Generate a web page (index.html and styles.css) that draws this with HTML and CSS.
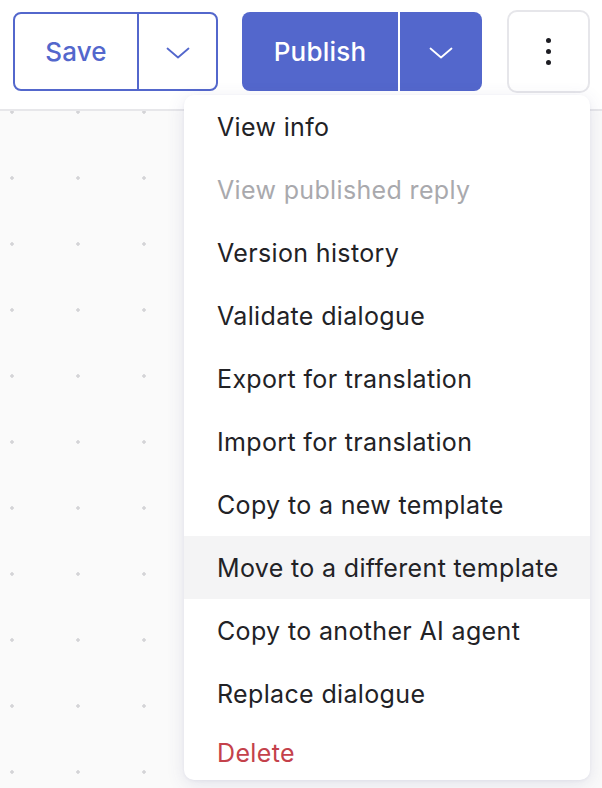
FILE: index.html
```html
<!DOCTYPE html>
<html>
<head>
<meta charset="utf-8">
<link rel="stylesheet" href="styles.css">
</head>
<body>
<div class="page">
  <header class="toolbar">
    <div class="split split-outline">
      <button class="seg seg-main">Save</button>
      <button class="seg seg-caret" aria-label="More save options">
        <svg width="24" height="12" viewBox="0 0 24 12"><path d="M1.5 1.5 L12 10.5 L22.5 1.5" fill="none" stroke="currentColor" stroke-width="1.8" stroke-linecap="round" stroke-linejoin="round"/></svg>
      </button>
    </div>
    <div class="split split-solid">
      <button class="seg seg-main">Publish</button>
      <button class="seg seg-caret" aria-label="More publish options">
        <svg width="24" height="12" viewBox="0 0 24 12"><path d="M1.5 1.5 L12 10.5 L22.5 1.5" fill="none" stroke="currentColor" stroke-width="1.8" stroke-linecap="round" stroke-linejoin="round"/></svg>
      </button>
    </div>
    <button class="kebab" aria-label="More">
      <span class="dot"></span><span class="dot"></span><span class="dot"></span>
    </button>
  </header>
  <main class="canvas"></main>
  <ul class="menu">
    <li class="item">View info</li>
    <li class="item disabled">View published reply</li>
    <li class="item">Version history</li>
    <li class="item">Validate dialogue</li>
    <li class="item">Export for translation</li>
    <li class="item">Import for translation</li>
    <li class="item">Copy to a new template</li>
    <li class="item hover">Move to a different template</li>
    <li class="item">Copy to another AI agent</li>
    <li class="item">Replace dialogue</li>
    <li class="item danger last">Delete</li>
  </ul>
</div>
</body>
</html>
```
FILE: styles.css
```css
* { box-sizing: border-box; }
html, body { margin: 0; padding: 0; }
body {
  width: 602px;
  height: 788px;
  overflow: hidden;
  font-family: Inter, "Noto Sans", "Liberation Sans", sans-serif;
  background: #fafafa;
}
.page {
  position: relative;
  width: 602px;
  height: 788px;
  display: flex;
  flex-direction: column;
}
.toolbar {
  height: 111px;
  flex: none;
  background: #ffffff;
  border-bottom: 2px solid #e7e7ea;
  display: flex;
  align-items: flex-start;
  padding: 12px 0 0 13px;
  gap: 24px;
}
.split {
  display: flex;
  height: 79px;
  border-radius: 8px;
  overflow: hidden;
}
.seg {
  border: none;
  background: transparent;
  color: inherit;
  font-family: inherit;
  font-size: 26px;
  font-weight: 500;
  letter-spacing: 0.2px;
  display: flex;
  align-items: center;
  justify-content: center;
  padding: 0;
  margin: 0;
}
.split-outline {
  border: 2px solid #5367cc;
  color: #5367cc;
  width: 205px;
}
.split-outline .seg-main { width: 124px; border-right: 2px solid #5367cc; }
.split-outline .seg-caret { flex: 1; }
.split-solid {
  background: #5367cc;
  color: #ffffff;
  width: 240px;
}
.split-solid .seg-main { width: 158px; border-right: 2px solid #ffffff; }
.split-solid .seg-caret { flex: 1; }
.seg-caret svg { display: block; margin-top: 2px; }
.kebab {
  width: 83px;
  height: 83px;
  margin-left: 1px;
  margin-top: -2px;
  border: 2px solid #e6e6ea;
  border-radius: 10px;
  background: #ffffff;
  display: flex;
  flex-direction: column;
  align-items: center;
  justify-content: center;
  gap: 5.5px;
  padding: 0;
}
.dot {
  width: 5.5px;
  height: 5.5px;
  border-radius: 50%;
  background: #1c1c22;
}
.canvas {
  flex: 1;
  background-color: #fafafa;
  background-image: radial-gradient(circle, #d4d4d7 1.5px, transparent 1.9px);
  background-size: 66px 66px;
  background-position: 45px 34px;
}
.menu {
  position: absolute;
  left: 184px;
  top: 95px;
  width: 406px;
  height: 685px;
  margin: 0;
  padding: 0;
  list-style: none;
  background: #ffffff;
  border-radius: 10px;
  box-shadow: 0 4px 18px rgba(70, 70, 130, 0.13), 0 1px 3px rgba(70, 70, 130, 0.06);
  overflow: hidden;
}
.item {
  height: 63px;
  display: flex;
  align-items: center;
  padding-left: 33px;
  font-size: 25px;
  color: #222226;
  letter-spacing: 0.35px;
}
.item.disabled { color: #a9a9ad; }
.item.hover { background: #f4f4f5; }
.item.danger { color: #c4414b; }
.item.last { height: 55px; }
```
